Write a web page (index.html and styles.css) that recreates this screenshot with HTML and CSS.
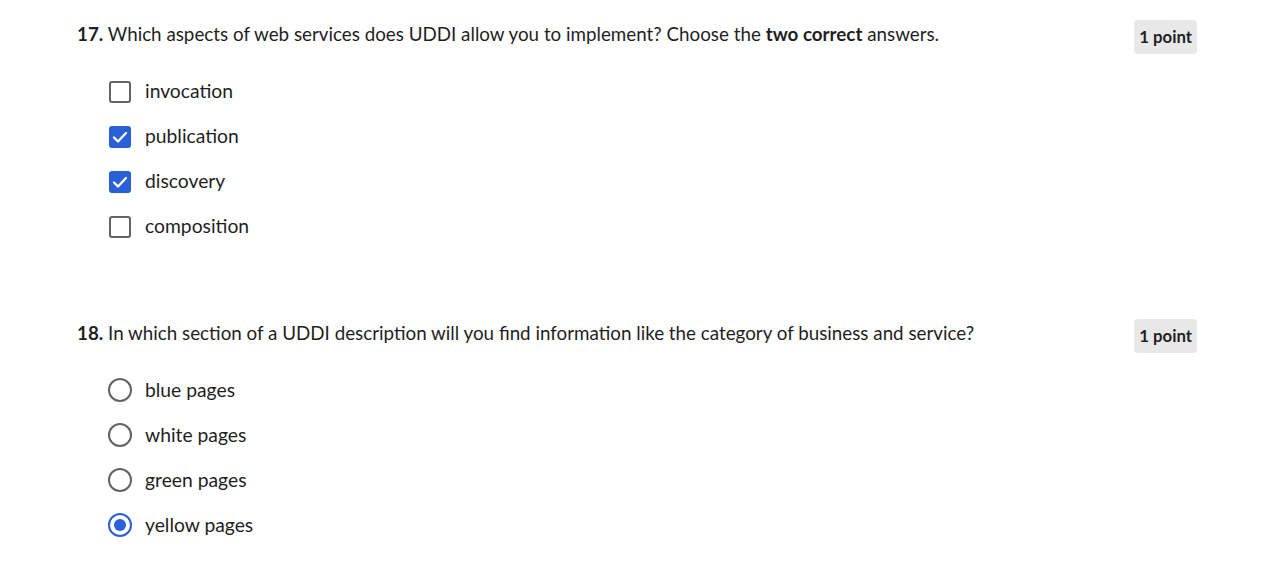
FILE: index.html
```html
<!DOCTYPE html>
<html lang="en">
<head>
<meta charset="utf-8">
<title>Quiz</title>
<link rel="stylesheet" href="styles.css">
</head>
<body>
<main class="quiz">
  <section class="question">
    <div class="q-head">
      <div class="q-title"><strong>17.</strong> Which aspects of web services does UDDI allow you to implement? Choose the <strong>two correct</strong> answers.</div>
      <span class="points">1 point</span>
    </div>
    <ul class="options">
      <li class="option"><span class="ctrl"><span class="checkbox"></span></span><span class="label">invocation</span></li>
      <li class="option"><span class="ctrl"><span class="checkbox checked"><svg viewBox="0 0 22 22" width="22" height="22"><polyline points="5,11.5 9,15.5 17,7" fill="none" stroke="#fff" stroke-width="2.3" stroke-linecap="round" stroke-linejoin="round"/></svg></span></span><span class="label">publication</span></li>
      <li class="option"><span class="ctrl"><span class="checkbox checked"><svg viewBox="0 0 22 22" width="22" height="22"><polyline points="5,11.5 9,15.5 17,7" fill="none" stroke="#fff" stroke-width="2.3" stroke-linecap="round" stroke-linejoin="round"/></svg></span></span><span class="label">discovery</span></li>
      <li class="option"><span class="ctrl"><span class="checkbox"></span></span><span class="label">composition</span></li>
    </ul>
  </section>
  <section class="question">
    <div class="q-head">
      <div class="q-title"><strong>18.</strong> In which section of a UDDI description will you find information like the category of business and service?</div>
      <span class="points">1 point</span>
    </div>
    <ul class="options">
      <li class="option"><span class="ctrl"><span class="radio"></span></span><span class="label">blue pages</span></li>
      <li class="option"><span class="ctrl"><span class="radio"></span></span><span class="label">white pages</span></li>
      <li class="option"><span class="ctrl"><span class="radio"></span></span><span class="label">green pages</span></li>
      <li class="option"><span class="ctrl"><span class="radio selected"></span></span><span class="label">yellow pages</span></li>
    </ul>
  </section>
</main>
</body>
</html>
```
FILE: styles.css
```css
html, body {
  margin: 0;
  padding: 0;
  background: #ffffff;
}
body {
  font-family: Lato, "Liberation Sans", sans-serif;
  color: #1f1f1f;
  font-size: 18px;
}
.quiz {
  display: flex;
  flex-direction: column;
  gap: 61px;
  padding: 0 86px 0 77px;
}
.question {
  padding-top: 20px;
}
.q-head {
  display: flex;
  justify-content: space-between;
  align-items: flex-start;
  gap: 24px;
}
.q-title {
  margin-top: 2px;
  line-height: 24px;
  font-size: 18.8px;
}
.q-title strong {
  font-weight: 700;
}
.points {
  flex: none;
  display: inline-flex;
  align-items: center;
  height: 34px;
  padding: 0 5px 1px;
  box-sizing: border-box;
  border-radius: 4px;
  background: #e8e8e8;
  font-size: 16.8px;
  font-weight: 700;
  color: #1f1f1f;
}
.options {
  list-style: none;
  margin: 25px 0 0;
  padding: 0 0 0 31px;
  display: flex;
  flex-direction: column;
  gap: 21px;
}
.option {
  display: flex;
  align-items: center;
  gap: 13px;
  height: 24px;
}
.ctrl {
  width: 24px;
  height: 24px;
  display: flex;
  align-items: center;
  justify-content: center;
  flex: none;
}
.checkbox {
  width: 22px;
  height: 22px;
  box-sizing: border-box;
  border: 2px solid #636363;
  border-radius: 3px;
  background: #fff;
  display: flex;
  align-items: center;
  justify-content: center;
  margin-top: 1px;
}
.checkbox.checked {
  border: none;
  background: #2a5fd6;
}
.checkbox svg {
  display: block;
}
.radio {
  width: 24px;
  height: 24px;
  box-sizing: border-box;
  border: 2px solid #636363;
  border-radius: 50%;
  background: #fff;
  display: flex;
  align-items: center;
  justify-content: center;
}
.radio.selected {
  border-color: #2a5fd6;
}
.radio.selected::after {
  content: "";
  width: 12px;
  height: 12px;
  border-radius: 50%;
  background: #2a5fd6;
}
.label {
  font-size: 19.3px;
  line-height: 24px;
}
```
